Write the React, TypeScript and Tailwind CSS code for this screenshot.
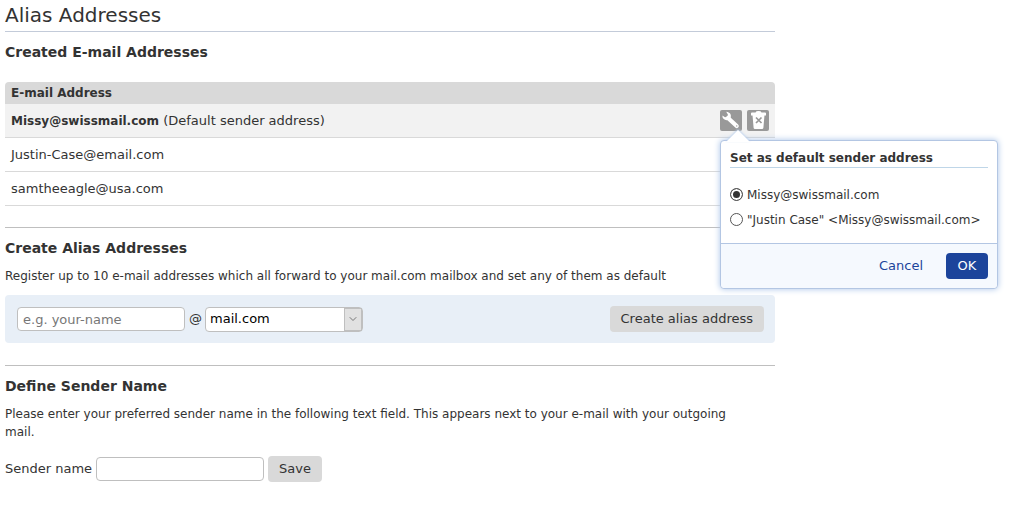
import React, { useState } from 'react'
import { ChevronDown } from 'lucide-react'


const addresses = [
    { email: 'Missy@swissmail.com', isDefault: true },
    { email: 'Justin-Case@email.com', isDefault: false },
    { email: 'samtheeagle@usa.com', isDefault: false },
]

const senders = ['Missy@swissmail.com', '"Justin Case" <Missy@swissmail.com>']

const buttonClass = "h-[26px] rounded bg-[#d9d9d9] px-[11px] text-[#333] hover:bg-[#cccccc]"
const inputClass = "h-6 w-[168px] rounded border border-[#bfbfbf] bg-white px-[5px] placeholder:text-[#777]"

function WrenchIcon() {
    return (
        <svg viewBox="0 0 22 21" className="block h-[21px] w-[22px]" aria-hidden="true">
            <path d="M8 8 16.7 16" stroke="#fff" strokeWidth="4.2" strokeLinecap="round" />
            <path d="M6.2 1.8C10 2 11.8 5 10.5 8 9 11 4.5 11 2.6 7.4L2.4 5.6 5 7.3 7.4 6.8 7.9 4.5Z" fill="#fff" />
            <circle cx="16.7" cy="15.9" r="0.7" fill="#999" />
        </svg>
    )
}

function TrashIcon() {
    return (
        <svg viewBox="0 0 22 21" className="block h-[21px] w-[22px]" aria-hidden="true">
            <path d="M4 3.2Q4 2.4 5 2.4H8.5Q9 1 11.5 1T14.5 2.4H18Q19 2.4 19 3.2V5.5H4Z" fill="#fff" />
            <path d="M5.5 5H17.5L16.4 17.7Q16.3 19 15 19H8Q6.7 19 6.6 17.7Z" fill="#fff" />
            <path d="M9 7.5 14.5 13M14.5 7.5 9 13" stroke="#999" strokeWidth="1.7" />
        </svg>
    )
}

function SenderPopup({ onClose }: { onClose: () => void }) {
    const [selected, setSelected] = useState(senders[0])

    return (
        <div role="dialog" aria-labelledby="popup-title" className="absolute top-[30px] left-0 z-10 w-[278px] rounded border border-[#b3c6e3] bg-white text-xs shadow-[0_0_6px_#a9c3e8]">
            {/* arrow that points at the wrench */}
            <svg viewBox="0 0 24 13" className="absolute -top-3 left-[5px] h-[13px] w-6 drop-shadow-[0_-1px_1px_#b9cfec]" aria-hidden="true">
                <path d="M0 13 12 1 24 13Z" fill="#fff" />
            </svg>
            <div className="px-[9px] pt-2 pb-[11px]">
                <h3 id="popup-title" className="border-b border-[#bfd6e8] leading-[18px] font-bold">Set as default sender address</h3>
                <div className="mt-[14px]">
                    {senders.map((sender) => (
                        <label key={sender} className="flex h-[25px] items-center gap-1 whitespace-nowrap">
                            <input
                                type="radio"
                                name="sender"
                                value={sender}
                                checked={selected === sender}
                                onChange={() => setSelected(sender)}
                                className="size-[13px] shrink-0 appearance-none rounded-full border border-[#555] bg-white checked:bg-[#333] checked:shadow-[inset_0_0_0_2px_#fff]"
                            />
                            {sender}
                        </label>
                    ))}
                </div>
            </div>
            <div className="flex items-center justify-end gap-[23px] rounded-b border-t border-[#b3c6e3] bg-[#f5f9fe] px-[9px] py-[9px] text-[13px]">
                <button type="button" onClick={onClose} className="text-[#1c449b]">Cancel</button>
                <button type="button" onClick={onClose} className="h-[26px] w-[42px] rounded bg-[#1c449b] text-white">OK</button>
            </div>
        </div>
    )
}

export default function App() {
    const [popupOpen, setPopupOpen] = useState(true)
    const [alias, setAlias] = useState('')
    const [senderName, setSenderName] = useState('')

    const handleSubmit = (e: React.FormEvent<HTMLFormElement>) => { e.preventDefault() }

    return (
        <main className="w-full max-w-[780px] px-[5px] font-['DejaVu_Sans',Verdana,sans-serif] text-[13px] leading-[18px] text-[#333]">
            <h1 className="border-b border-[#c3cbd9] pb-px text-xl leading-[30px]">Alias Addresses</h1>

            <section>
                <h2 className="mt-[10px] text-sm leading-5 font-bold">Created E-mail Addresses</h2>
                <table className="mt-5 w-full border-separate border-spacing-0">
                    <thead>
                        <tr className="h-[22px] text-left text-xs">
                            <th scope="col" colSpan={2} className="rounded-t bg-[#d9d9d9] px-[6px] font-bold">E-mail Address</th>
                        </tr>
                    </thead>
                    <tbody>
                        {addresses.map(({ email, isDefault }) => (
                            <tr key={email} className={isDefault ? "h-[34px] bg-[#f2f2f2]" : "h-[34px]"}>
                                <td className="border-b border-[#d9d9d9] px-[6px]">
                                    {isDefault ? <><b className="text-xs">{email}</b> (Default sender address)</> : email}
                                </td>
                                <td className="border-b border-[#d9d9d9] pr-[6px]">
                                    {isDefault && (
                                        <div className="flex justify-end gap-[5px]">
                                            <div className="relative">
                                                <button type="button" aria-label="Settings" onClick={() => setPopupOpen(!popupOpen)} className="block rounded-xs bg-[#999]"><WrenchIcon /></button>
                                                {popupOpen && <SenderPopup onClose={() => setPopupOpen(false)} />}
                                            </div>
                                            <button type="button" aria-label="Delete" className="block rounded-xs bg-[#999]"><TrashIcon /></button>
                                        </div>
                                    )}
                                </td>
                            </tr>
                        ))}
                    </tbody>
                </table>
            </section>

            <section className="mt-[21px] border-t border-[#bfbfbf] pt-[10px]">
                <h2 className="text-sm leading-5 font-bold">Create Alias Addresses</h2>
                <p className="mt-[9px] text-xs leading-[18px]">Register up to 10 e-mail addresses which all forward to your mail.com mailbox and set any of them as default</p>
                <form onSubmit={handleSubmit} className="mt-[10px] flex items-center rounded bg-[#e8eff7] py-[11px] pr-[11px] pl-3">
                    <input aria-label="Alias name" value={alias} onChange={(e) => setAlias(e.target.value)} type="text" placeholder="e.g. your-name" className={inputClass} />
                    <span className="mr-[3px] ml-1">@</span>
                    <div className="relative">
                        <select aria-label="Domain" className="block h-[25px] w-[158px] appearance-none rounded border border-[#bfbfbf] bg-white px-1 text-black">
                            <option>mail.com</option>
                            <option>email.com</option>
                            <option>usa.com</option>
                        </select>
                        <span className="pointer-events-none absolute inset-y-px right-px flex w-[18px] items-center justify-center border border-[#bfbfbf] bg-[#e1e1e1]">
                            <ChevronDown size={12} color="#777" />
                        </span>
                    </div>
                    <button type="submit" className={`${buttonClass} ml-auto`}>Create alias address</button>
                </form>
            </section>

            <section className="mt-[22px] border-t border-[#bfbfbf] pt-[10px]">
                <h2 className="text-sm leading-5 font-bold">Define Sender Name</h2>
                <p className="mt-[9px] pr-6 text-xs leading-[18px]">Please enter your preferred sender name in the following text field. This appears next to your e-mail with your outgoing mail.</p>
                <form onSubmit={handleSubmit} className="mt-[15px] flex items-center gap-1">
                    <label htmlFor="sendername">Sender name</label>
                    <input id="sendername" value={senderName} onChange={(e) => setSenderName(e.target.value)} type="text" className={inputClass} />
                    <button type="submit" className={buttonClass}>Save</button>
                </form>
            </section>
        </main>
    )
}
